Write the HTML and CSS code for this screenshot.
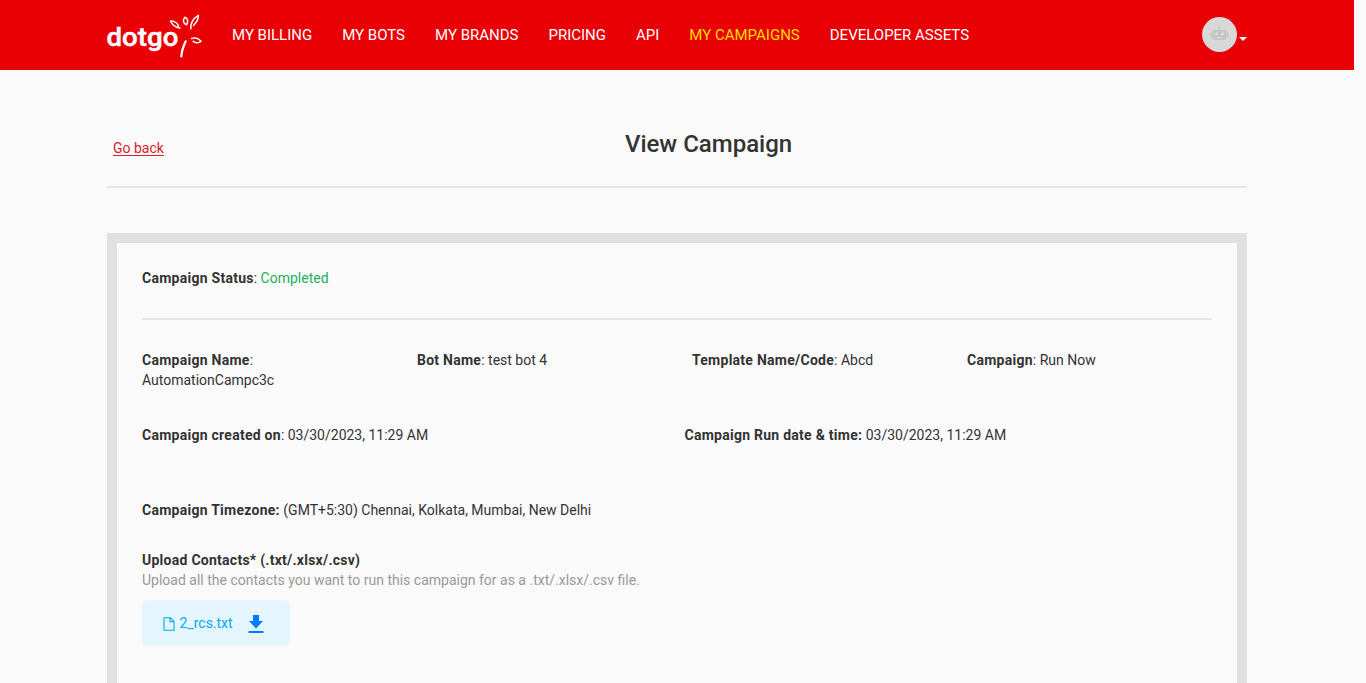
FILE: index.html
```html
<!DOCTYPE html>
<html lang="en">
<head>
<meta charset="utf-8">
<title>View Campaign</title>
<link rel="stylesheet" href="styles.css">
</head>
<body>
<div class="page">
  <header class="header">
    <div class="container nav">
      <svg class="logo" viewBox="0 0 96 46" aria-label="dotgo">
        <text class="logo-text" x="-.5" y="34" textLength="72" lengthAdjust="spacingAndGlyphs">dotgo</text>
        <g class="petals">
          <path d="M73 16C69 15.500 65 12.500 63.500 9C67 9 70.500 11 71.500 14"/>
          <path d="M78 5.200C81 6.500 81.500 10 79.500 12.700C76 11.500 75.500 7.500 78 5.200Z"/>
          <path d="M83.800 16.700C83.500 12 86 6.500 91.300 3.300C91.500 7 89.500 10.500 86.500 13.500"/>
          <path d="M84.500 26.500C87.500 25.500 91.500 26 94 29.500C91.500 31.300 88 31 86.200 29.200"/>
          <path class="stem" d="M78.700 29.300C76.500 34 74.700 39 74.300 44.500"/>
        </g>
      </svg>
      <nav class="menu">
        <a>MY BILLING</a><a>MY BOTS</a><a>MY BRANDS</a><a>PRICING</a><a>API</a><a class="active">MY CAMPAIGNS</a><a>DEVELOPER ASSETS</a>
      </nav>
      <div class="profile">
        <svg class="avatar" viewBox="0 0 35 35">
          <circle cx="17.500" cy="17.500" r="17.500" fill="#d8d8d8"/>
          <g fill="#c4c4c4">
            <rect x="10.500" y="13" width="14" height="10" rx="2"/>
            <rect x="8.500" y="15" width="1.500" height="6" rx=".7"/>
            <rect x="25" y="15" width="1.500" height="6" rx=".7"/>
            <rect x="17" y="10" width="1" height="3"/>
          </g>
          <circle cx="17.500" cy="9.500" r="1" fill="none" stroke="#c4c4c4" stroke-width=".7"/>
          <circle cx="14.500" cy="16.700" r="1.500" fill="#dedede"/>
          <circle cx="20.500" cy="16.700" r="1.500" fill="#dedede"/>
          <rect x="15" y="20" width="5" height="1" rx=".5" fill="#dedede"/>
        </svg>
        <span class="caret"></span>
      </div>
    </div>
  </header>
  <main class="container">
    <div class="title-row">
      <a class="back">Go back</a>
      <h1>View Campaign</h1>
    </div>
    <section class="card">
      <p class="status"><b>Campaign Status</b>: <span class="done">Completed</span></p>
      <div class="row four">
        <p><b>Campaign Name</b>:<br>AutomationCampc3c</p>
        <p><b>Bot Name</b>: test bot 4</p>
        <p><b>Template Name/Code</b>: Abcd</p>
        <p><b>Campaign</b>: Run Now</p>
      </div>
      <div class="row two">
        <p><b>Campaign created on</b>: 03/30/2023, 11:29 AM</p>
        <p><b>Campaign Run date &amp; time:</b> 03/30/2023, 11:29 AM</p>
      </div>
      <p class="zone"><b>Campaign Timezone:</b> (GMT+5:30) Chennai, Kolkata, Mumbai, New Delhi</p>
      <p><b>Upload Contacts* (.txt/.xlsx/.csv)</b></p>
      <p class="hint">Upload all the contacts you want to run this campaign for as a .txt/.xlsx/.csv file.</p>
      <div class="file">
        <svg class="doc" viewBox="0 0 12 14"><path d="M1 .7H7.200L11 4.500V13.300H1ZM7 .7V4.700H11"/></svg>
        <span class="name">2_rcs.txt</span>
        <svg class="download" viewBox="0 0 16 18"><path d="M5 0H11V6H15L8 13.500L1 6H5ZM.5 16H15.500V18H.5Z"/></svg>
      </div>
    </section>
  </main>
</div>
</body>
</html>
```
FILE: styles.css
```css
* { box-sizing: border-box; }
html { background: #fafafa; }
body {
  margin: 0;
  font: 14px/20px Roboto, sans-serif;
  color: #333;
}
p, h1 { margin: 0; }
b { font-weight: 700; letter-spacing: .26px; }
.page { width: 1354px; }
.header { height: 70px; background: #e80005; }
.container { width: 1140px; margin: 0 auto; }
.nav { display: flex; align-items: center; height: 70px; }
.logo { width: 96px; height: 46px; flex: none; overflow: visible; }
.logo-text { font: 500 25px Roboto, sans-serif; fill: #fff; stroke: #fff; stroke-width: .4; }
.petals { fill: none; stroke: #fff; stroke-width: 1.5; stroke-linecap: round; stroke-linejoin: round; }
.stem { stroke-width: 2.2; }
.menu {
  display: flex;
  gap: 30px;
  margin-left: 29px;
  font-size: 15px;
  color: #fff;
  white-space: nowrap;
}
.menu .active { color: #ffdc00; }
.profile { display: flex; align-items: center; margin-left: auto; height: 35px; margin-bottom: 1px; }
.avatar { width: 35px; height: 35px; }
.caret {
  margin: 9px 0 0 2px;
  border: 4px solid transparent;
  border-top-color: #fff;
  border-bottom: 0;
}
.title-row {
  display: flex;
  height: 118px;
  border-bottom: 2px solid #e6e6e6;
}
.back {
  margin: 69px 0 0 6px;
  height: 17px;
  line-height: 18px;
  color: #d9202c;
  border-bottom: 1px solid #d9202c;
}
h1 { margin: 58px 0 0 461px; font-size: 24px; line-height: 32px; font-weight: 500; }
.card {
  height: 450px;
  margin-top: 45px;
  padding: 25px;
  border: 10px solid #e0e0e0;
  border-bottom: 0;
}
.status { height: 52px; border-bottom: 2px solid #e6e6e6; }
.done { color: #27ae60; }
.row { display: grid; height: 75px; }
.four { grid-template-columns: repeat(4, 275px); margin: 30px -30px 0 0; }
.two { grid-template-columns: 542.5px 1fr; }
.zone { height: 50px; }
.hint { color: #999; }
.file {
  display: flex;
  align-items: center;
  width: 148px;
  height: 46px;
  margin-top: 10px;
  padding-left: 21px;
  border-radius: 6px;
  background: #e4f5fe;
  color: #03a9f4;
}
.doc { width: 12px; height: 14px; fill: none; stroke: #03a9f4; stroke-width: 1.1; margin-top: 1px; }
.name { margin-left: 4.5px; }
.download { width: 16px; height: 18px; margin: 2px 0 0 15px; fill: #007bff; }
```
